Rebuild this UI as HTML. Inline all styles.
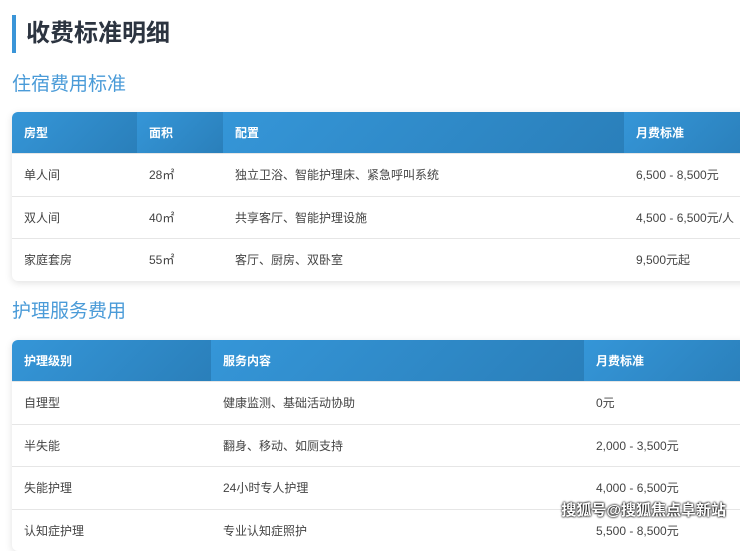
<!DOCTYPE html>
<html><head><meta charset="utf-8"><style>
body{margin:0;background:#fff;width:740px;height:526px;overflow:hidden;position:relative;font-family:"Liberation Sans","Noto Sans CJK SC",sans-serif;}
.h1{position:absolute;left:12px;top:15px;height:38px;border-left:4px solid #3a95d8;padding-left:10px;font-size:24px;font-weight:bold;color:#2c3440;line-height:38px;}
.h2{position:absolute;left:12px;font-size:19px;color:#4a9bd8;line-height:24px;}
table{position:absolute;left:12px;border-collapse:collapse;font-size:12px;color:#444;box-shadow:0 2px 8px rgba(0,0,0,.12);border-radius:6px 0 0 6px;overflow:hidden;background:#fff;}
th{height:41px;padding:0 0 0 12px;text-align:left;color:#fff;font-weight:bold;font-size:12px;background:linear-gradient(135deg,#3596d8,#2a7fba);}
td{padding:0 0 0 12px;height:41.5px;border-top:1px solid #e6e6e6;}
.wm{position:absolute;right:14px;bottom:6px;font-size:15px;font-weight:bold;color:#fff;text-shadow:0 0 2px #000,0 0 2px #000;}
</style></head><body>
<div class="h1">收费标准明细</div>
<div class="h2" style="top:73px">住宿费用标准</div>
<table style="top:112px;width:740px">
<tr><th style="width:113px">房型</th><th style="width:74px">面积</th><th style="width:389px">配置</th><th>月费标准</th></tr>
<tr><td>单人间</td><td>28㎡</td><td>独立卫浴、智能护理床、紧急呼叫系统</td><td>6,500 - 8,500元</td></tr>
<tr><td>双人间</td><td>40㎡</td><td>共享客厅、智能护理设施</td><td>4,500 - 6,500元/人</td></tr>
<tr><td>家庭套房</td><td>55㎡</td><td>客厅、厨房、双卧室</td><td>9,500元起</td></tr>
</table>
<div class="h2" style="top:300px">护理服务费用</div>
<table style="top:340px;width:740px">
<tr><th style="width:187px">护理级别</th><th style="width:361px">服务内容</th><th>月费标准</th></tr>
<tr><td>自理型</td><td>健康监测、基础活动协助</td><td>0元</td></tr>
<tr><td>半失能</td><td>翻身、移动、如厕支持</td><td>2,000 - 3,500元</td></tr>
<tr><td>失能护理</td><td>24小时专人护理</td><td>4,000 - 6,500元</td></tr>
<tr><td>认知症护理</td><td>专业认知症照护</td><td>5,500 - 8,500元</td></tr>
</table>
<div class="wm">搜狐号@搜狐焦点阜新站</div>
</body></html>
